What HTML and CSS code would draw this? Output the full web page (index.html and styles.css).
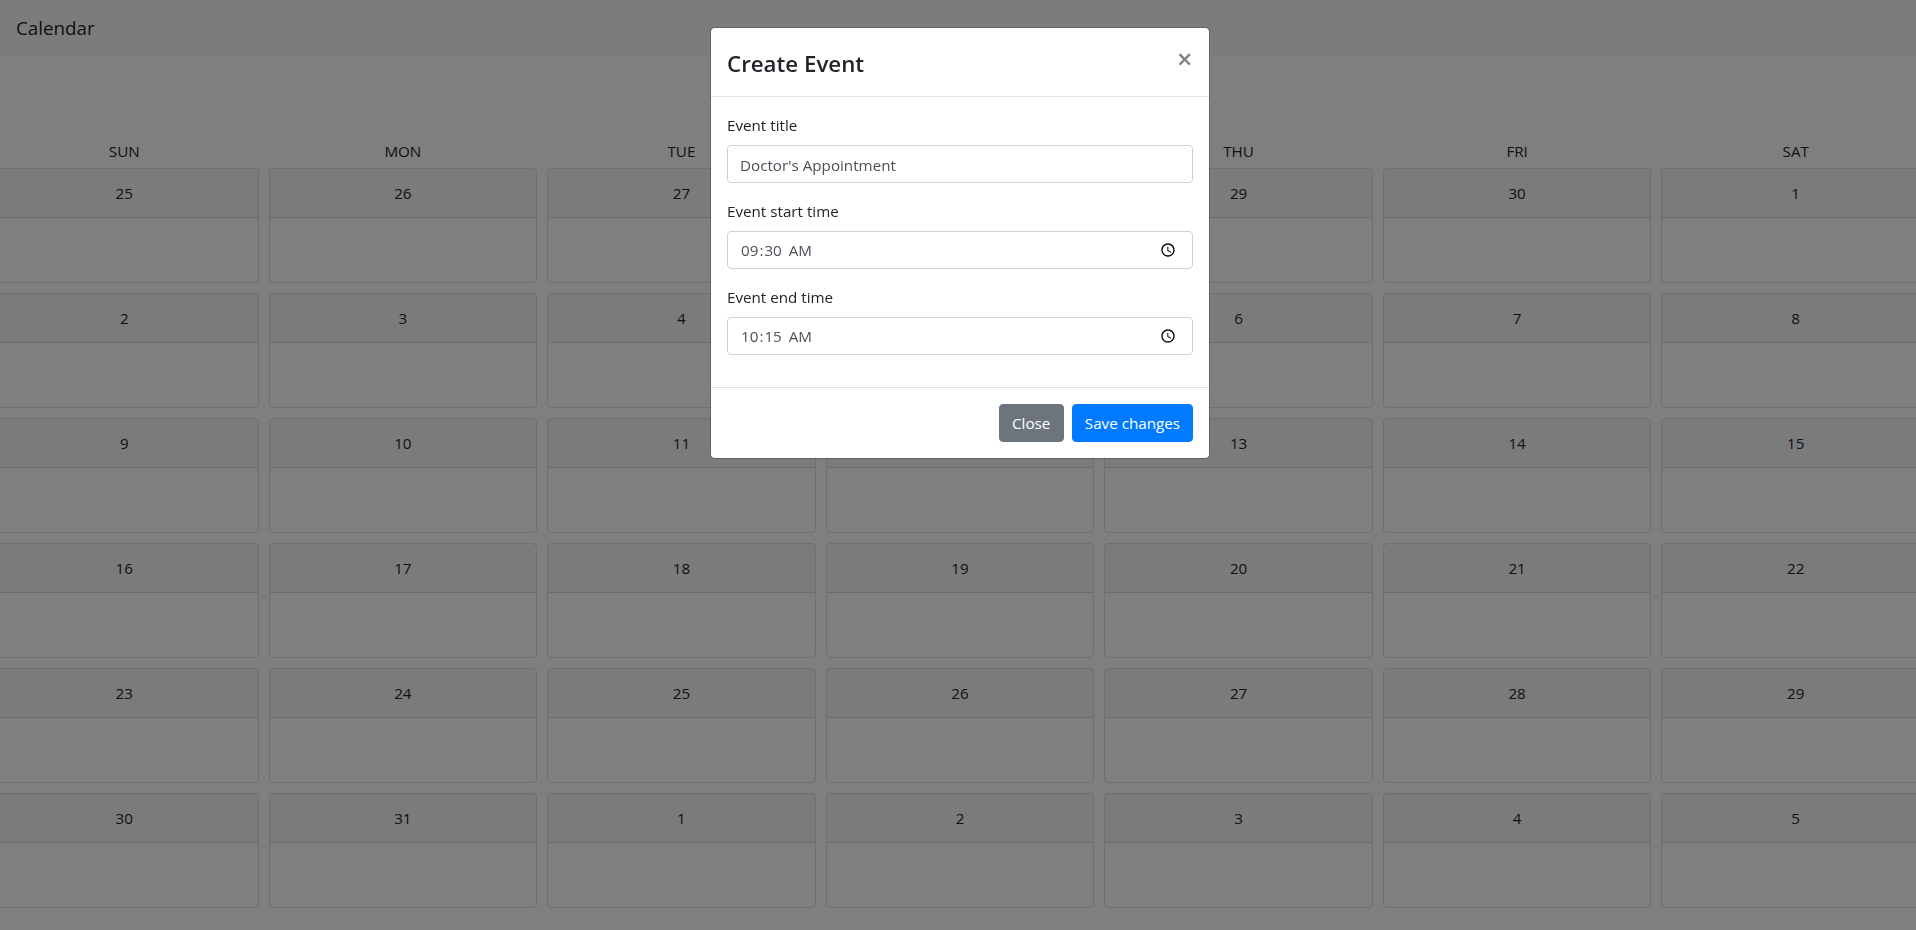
FILE: index.html
```html
<!DOCTYPE html>
<html lang="en">
<head>
  <meta charset="UTF-8" />
  <title>Calendar</title>
  <link rel="stylesheet" href="styles.css">
</head>
<body>

  <nav class="navbar"><a class="brand" href="#">Calendar</a></nav>

  <main class="calendar">
    <div class="week-head">
      <div>SUN</div><div>MON</div><div>TUE</div><div>WED</div><div>THU</div><div>FRI</div><div>SAT</div>
    </div>
    <div class="days">
      <div class="day"><div class="day-num">25</div><div class="day-body"></div></div>
      <div class="day"><div class="day-num">26</div><div class="day-body"></div></div>
      <div class="day"><div class="day-num">27</div><div class="day-body"></div></div>
      <div class="day"><div class="day-num">28</div><div class="day-body"></div></div>
      <div class="day"><div class="day-num">29</div><div class="day-body"></div></div>
      <div class="day"><div class="day-num">30</div><div class="day-body"></div></div>
      <div class="day"><div class="day-num">1</div><div class="day-body"></div></div>

      <div class="day"><div class="day-num">2</div><div class="day-body"></div></div>
      <div class="day"><div class="day-num">3</div><div class="day-body"></div></div>
      <div class="day"><div class="day-num">4</div><div class="day-body"></div></div>
      <div class="day"><div class="day-num">5</div><div class="day-body"></div></div>
      <div class="day"><div class="day-num">6</div><div class="day-body"></div></div>
      <div class="day"><div class="day-num">7</div><div class="day-body"></div></div>
      <div class="day"><div class="day-num">8</div><div class="day-body"></div></div>

      <div class="day"><div class="day-num">9</div><div class="day-body"></div></div>
      <div class="day"><div class="day-num">10</div><div class="day-body"></div></div>
      <div class="day"><div class="day-num">11</div><div class="day-body"></div></div>
      <div class="day"><div class="day-num">12</div><div class="day-body"></div></div>
      <div class="day"><div class="day-num">13</div><div class="day-body"></div></div>
      <div class="day"><div class="day-num">14</div><div class="day-body"></div></div>
      <div class="day"><div class="day-num">15</div><div class="day-body"></div></div>

      <div class="day"><div class="day-num">16</div><div class="day-body"></div></div>
      <div class="day"><div class="day-num">17</div><div class="day-body"></div></div>
      <div class="day"><div class="day-num">18</div><div class="day-body"></div></div>
      <div class="day"><div class="day-num">19</div><div class="day-body"></div></div>
      <div class="day"><div class="day-num">20</div><div class="day-body"></div></div>
      <div class="day"><div class="day-num">21</div><div class="day-body"></div></div>
      <div class="day"><div class="day-num">22</div><div class="day-body"></div></div>

      <div class="day"><div class="day-num">23</div><div class="day-body"></div></div>
      <div class="day"><div class="day-num">24</div><div class="day-body"></div></div>
      <div class="day"><div class="day-num">25</div><div class="day-body"></div></div>
      <div class="day"><div class="day-num">26</div><div class="day-body"></div></div>
      <div class="day"><div class="day-num">27</div><div class="day-body"></div></div>
      <div class="day"><div class="day-num">28</div><div class="day-body"></div></div>
      <div class="day"><div class="day-num">29</div><div class="day-body"></div></div>

      <div class="day"><div class="day-num">30</div><div class="day-body"></div></div>
      <div class="day"><div class="day-num">31</div><div class="day-body"></div></div>
      <div class="day"><div class="day-num">1</div><div class="day-body"></div></div>
      <div class="day"><div class="day-num">2</div><div class="day-body"></div></div>
      <div class="day"><div class="day-num">3</div><div class="day-body"></div></div>
      <div class="day"><div class="day-num">4</div><div class="day-body"></div></div>
      <div class="day"><div class="day-num">5</div><div class="day-body"></div></div>
    </div>
  </main>

  <div class="backdrop"></div>

  <!-- Create event modal -->
  <div class="modal">
    <div class="modal-content">
      <div class="modal-header">
        <h5 class="modal-title">Create Event</h5>
        <button class="close" type="button">&times;</button>
      </div>
      <div class="modal-body">
        <div class="form-group">
          <label for="title">Event title</label>
          <input class="form-control" id="title" type="text" value="Doctor's Appointment" />
        </div>
        <div class="form-group">
          <label for="start">Event start time</label>
          <input class="form-control form-time" id="start" type="time" value="09:30" />
        </div>
        <div class="form-group">
          <label for="end">Event end time</label>
          <input class="form-control form-time" id="end" type="time" value="10:15" />
        </div>
      </div>
      <div class="modal-footer">
        <button class="btn btn-secondary" type="button">Close</button>
        <button class="btn btn-primary" type="button">Save changes</button>
      </div>
    </div>
  </div>

</body>
</html>
```

FILE: styles.css
```css
* {
  box-sizing: border-box;
}

html, body {
  height: 100%;
}

body {
  margin: 0;
  overflow: hidden;
  font-family: "Open Sans", "Noto Sans", sans-serif;
  font-size: 15.2px;
  line-height: 24px;
  color: #212529;
  background: #fff;
}

.navbar {
  height: 55px;
  padding: 8px 16px;
  background: #f8f9fa;
}

.brand {
  display: inline-block;
  padding: 5px 0;
  font-size: 18.8px;
  line-height: 30px;
  color: rgba(0, 0, 0, .9);
  text-decoration: none;
}

.calendar {
  width: 1950px;
  margin-left: -15px;
  padding-top: 84px;
}

.week-head,
.days {
  display: grid;
  grid-template-columns: repeat(7, 1fr);
  text-align: center;
}

.week-head {
  margin-bottom: 5px;
}

.days {
  row-gap: 10px;
}

.day {
  height: 115px;
  margin: 0 5px;
  border: 1px solid rgba(0, 0, 0, .125);
  border-radius: 4px;
}

.day-num {
  height: 49px;
  padding: 12px 20px;
  background: rgba(0, 0, 0, .03);
  border-bottom: 1px solid rgba(0, 0, 0, .125);
}

.backdrop {
  position: fixed;
  top: 0;
  left: 0;
  width: 100%;
  height: 100%;
  background: rgba(0, 0, 0, .5);
}

.modal {
  position: fixed;
  top: 0;
  left: 0;
  width: 1920px;
  height: 100%;
}

.modal-content {
  width: 500px;
  margin: 27px auto;
  background: #fff;
  background-clip: padding-box;
  border: 1px solid rgba(0, 0, 0, .2);
  border-radius: 4.8px;
}

.modal-header {
  display: flex;
  justify-content: space-between;
  padding: 16px;
  border-bottom: 1px solid #dee2e6;
}

.modal-title {
  margin: 0;
  padding-top: 2px;
  height: 36px;
  font-size: 22.3px;
  font-weight: 600;
  line-height: 36px;
}

.close {
  width: 16px;
  height: 32px;
  padding: 0 1px 0 0;
  margin-top: -2px;
  border: 0;
  background: transparent;
  font-family: inherit;
  font-size: 27px;
  font-weight: 600;
  line-height: 1;
  color: #000;
  opacity: .5;
}

.modal-body {
  padding: 16px;
}

.form-group {
  margin-bottom: 16px;
}

label {
  display: block;
  margin-bottom: 8px;
}

.form-control {
  display: block;
  width: 100%;
  height: 38px;
  padding: 7px 12px 5px;
  font-family: inherit;
  font-size: 15.2px;
  line-height: 24px;
  color: #495057;
  background: #fff;
  border: 1px solid #ced4da;
  border-radius: 4px;
}

.form-time {
  padding: 6px 13px 6px 12px;
}

.form-time::-webkit-datetime-edit-ampm-field {
  margin-left: 3px;
}

.modal-footer {
  display: flex;
  justify-content: flex-end;
  gap: 8px;
  padding: 16px;
  border-top: 1px solid #dee2e6;
}

.btn {
  height: 38px;
  padding: 6px 12px;
  font-family: inherit;
  font-size: 15.2px;
  line-height: 24px;
  color: #fff;
  border: 1px solid transparent;
  border-radius: 4px;
}

.btn-secondary {
  padding: 6px 12.5px;
  background: #6c757d;
  border-color: #6c757d;
}

.btn-primary {
  background: #007bff;
  border-color: #007bff;
}
```
